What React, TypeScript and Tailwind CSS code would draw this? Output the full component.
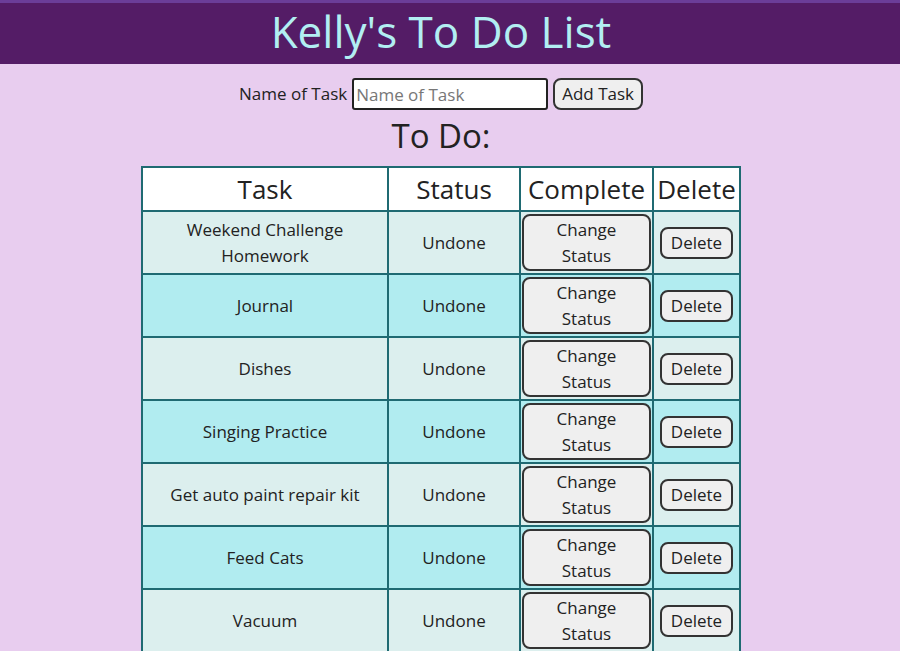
const tasks = [
  'Weekend Challenge Homework',
  'Journal',
  'Dishes',
  'Singing Practice',
  'Get auto paint repair kit',
  'Feed Cats',
  'Vacuum',
]

export default function App() {
  return (
    <div className="min-h-screen bg-[#e8cdef] pr-[18px] text-[#222] font-['Open_Sans',sans-serif]">
      <header className="-mr-[18px] h-[64px] border-t-[3px] border-[#6b3d98] bg-[#541c66] pr-[18px] text-center">
        <h1 className="text-[44px] leading-[56px] text-[#b2eef2]">Kelly's To Do List</h1>
      </header>
      <div className="mt-[14px] flex items-center justify-center gap-[5px] text-[17px]">
        <label>Name of Task</label>
        <input
          placeholder="Name of Task"
          className="h-[32px] w-[196px] rounded-[3px] border-2 border-[#222] bg-white px-[2px] text-[17px] placeholder:text-[#777] outline-none"
        />
        <button className="h-[32px] rounded-[8px] border-2 border-[#333] bg-[#efefef] px-[7px] text-[17px]">
          Add Task
        </button>
      </div>
      <h2 className="mt-[4px] text-center text-[33px] leading-[44px]">To Do:</h2>
      <table className="mx-auto mt-[8px] border-collapse border-2 border-[#1f6a72]">
        <thead>
          <tr className="h-[44px] bg-white text-[26px]">
            <th className="w-[246px] border-2 border-[#1f6a72] font-normal">Task</th>
            <th className="w-[132px] border-2 border-[#1f6a72] font-normal">Status</th>
            <th className="w-[133px] border-2 border-[#1f6a72] font-normal">Complete</th>
            <th className="w-[87px] border-2 border-[#1f6a72] font-normal">Delete</th>
          </tr>
        </thead>
        <tbody className="text-[17px] leading-[26px]">
          {tasks.map((t, i) => (
            <tr key={t} className={`h-[63px] ${i % 2 === 0 ? 'bg-[#dcefee]' : 'bg-[#b1ecf0]'}`}>
              <td className="border-2 border-[#1f6a72] px-[24px] text-center">{t}</td>
              <td className="border-2 border-[#1f6a72] text-center">Undone</td>
              <td className="border-2 border-[#1f6a72] p-[1px] text-center">
                <button className="h-[57px] w-[129px] rounded-[8px] border-2 border-[#333] bg-[#efefef] px-[20px] leading-[26px]">
                  Change Status
                </button>
              </td>
              <td className="border-2 border-[#1f6a72] text-center">
                <button className="h-[32px] rounded-[8px] border-2 border-[#333] bg-[#efefef] px-[9px]">
                  Delete
                </button>
              </td>
            </tr>
          ))}
        </tbody>
      </table>
    </div>
  )
}
